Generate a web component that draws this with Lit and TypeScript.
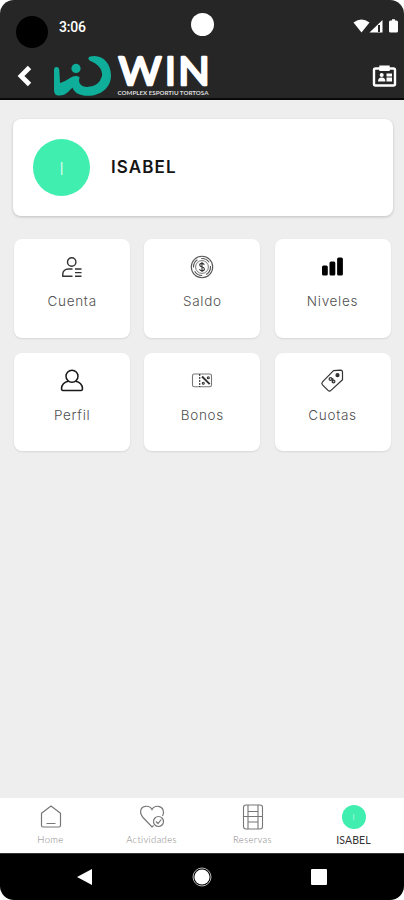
import { LitElement, html, css, TemplateResult } from "lit";
import { customElement, property } from "lit/decorators.js";
import { classMap } from "lit/directives/class-map.js";

const icons: Record<string, TemplateResult> = {
  cuenta: html`<svg width="24" height="24" viewBox="0 0 24 24" fill="none" stroke="#333" stroke-width="1.4">
    <circle cx="11.7" cy="7" r="4.2" /><path d="M12.5 14H8.2C5 14 2.8 16.4 2.8 19v2.2h9.7" />
    <path d="M15 14h6.5M15 17.6h6.5M15 21.2h6.5" /></svg>`,
  saldo: html`<svg width="24" height="24" viewBox="0 0 24 24" fill="none" stroke="#555" stroke-width="1.1">
    <circle cx="12" cy="12" r="10.7" /><circle cx="12" cy="12" r="8.5" stroke-dasharray="9 4" />
    <circle cx="12" cy="12" r="6.4" stroke-width=".8" />
    <path stroke="#333" d="M14.3 9.7c-.4-1-1.2-1.3-2.3-1.3-1.4 0-2.3.6-2.3 1.7 0 2.5 4.7 1.2 4.7 3.8 0 1.100-1 1.800-2.400 1.800-1.300 0-2.200-.6-2.500-1.600M12 7v10" /></svg>`,
  niveles: html`<svg width="24" height="24" viewBox="0 0 24 24" fill="#000">
    <rect x="2" y="10.500" width="5.800" height="10" rx="1.500" /><rect x="9.500" y="6.500" width="5.800" height="14" rx="1.500" />
    <rect x="17.100" y="2.500" width="5.800" height="18" rx="1.500" /></svg>`,
  perfil: html`<svg width="24" height="24" viewBox="0 0 24 24" fill="none" stroke="#181818" stroke-width="1.5" stroke-linejoin="round">
    <circle cx="12" cy="7.2" r="6" /><path d="M8.5 12.2C4.500 13 1.700 16 1.500 19.500c0 1.500.5 2 1.500 2h18c1 0 1.500-.5 1.500-2-.2-3.500-3-6.500-7-7.300" /></svg>`,
  bonos: html`<svg width="24" height="24" viewBox="0 0 24 24" fill="none" stroke="#333" stroke-width="1.1">
    <rect x="2.500" y="5" width="19" height="12.800" rx="1.800" stroke="#777" />
    <path d="M9.700 5v13" stroke-dasharray="2 1" /><path d="m12 7.500 7.700 7.700" stroke-width="1.900" />
    <circle cx="13.300" cy="14.300" r="1" /><circle cx="18.300" cy="8.700" r="1" /></svg>`,
  cuotas: html`<svg width="24" height="24" viewBox="0 0 24 24" fill="none" stroke="#333" stroke-width="1.2" stroke-linejoin="round">
    <path d="M13.5 1.700 20.500 1.200c1.300 0 2 .7 2 2v7.500L11 21.400c-1 .9-2 .9-3 0l-5.500-5.500c-.9-1-.9-2 0-3z" />
    <circle cx="17.500" cy="6.200" r="1.500" fill="#333" /><circle cx="10.500" cy="10" r="1.400" /><circle cx="13.500" cy="12.500" r="1.400" /><path d="M12.700 9v4.500" /></svg>`,
  home: html`<svg width="24" height="26" viewBox="0 0 24 26" fill="none" stroke="#777" stroke-width="1.2">
    <path d="M2.500 9.200 12 2l9.500 7.200v12.300a1.500 1.500 0 0 1-1.500 1.500H4a1.500 1.500 0 0 1-1.500-1.500z" stroke-linejoin="round" /><path d="M7.500 19.500h9" stroke-width="1" /></svg>`,
  actividades: html`<svg width="26" height="26" viewBox="0 0 26 26" fill="none" stroke="#777" stroke-width="1.2">
    <path d="M14.500 21.500 13 23 4 13.500C-.2 8.500 1.500 2.800 6.500 2.300 9.500 2 12 3.300 13 5.500c1-2.200 3.500-3.500 6.500-3.200 4.500.5 6.300 5.500 4 9.700" />
    <circle cx="19.500" cy="17.500" r="5" /><path d="m17 17.500 2 2 3.200-4" /></svg>`,
  reservas: html`<svg width="24" height="26" viewBox="0 0 24 26" fill="none" stroke="#777" stroke-width="1.1">
    <rect x="2.500" y="1" width="19" height="24" rx="2.500" /><path d="M7 1v24M17 1v24M2.500 12.500h19M7 7.500h10M7 18h10" /></svg>`,
};

@customElement("app-header")
export class AppHeader extends LitElement {
  static styles = css`
    :host { display: block; background: #262626; border-bottom: 2px solid #090909; border-radius: 14px 14px 0 0; height: 98px; color: #fff; }
    .status { display: grid; grid-template-columns: 1fr 23px 1fr; height: 52px; align-items: center; }
    .left { display: flex; align-items: center; gap: 11px; padding-left: 16px; }
    .lens { width: 32px; height: 32px; background: #000; border-radius: 50%; margin-top: 11px; }
    .time { font: 500 14px Roboto, sans-serif; letter-spacing: -.2px; margin-top: 2px; }
    .camera { width: 23px; height: 23px; background: #fff; border-radius: 50%; margin-top: -3px; }
    .signals { justify-self: end; width: 50px; height: 18px; margin-right: 3px; }
    .bar { display: flex; height: 46px; padding: 0 7px 0 16px; }
    .back { width: 17px; height: 24px; margin-top: 12px; }
    .logo { width: 160px; height: 53px; margin: -6px 0 0 19px; }
    .badge { width: 26px; height: 24px; margin: 12px 0 0 auto; }
    svg { display: block; }
  `;
  render() {
    return html`
      <div class="status">
        <div class="left"><span class="lens"></span><span class="time">3:06</span></div>
        <span class="camera"></span>
        <svg class="signals" viewBox="0 0 50 18" fill="#fff">
          <path d="M2.500 5.500Q10.500-.5 18.500 5.500L10.500 15.500z" />
          <path d="M31.500 3v12.500h-13z" /><path d="M27 8h2v7h-2z" fill="#262626" />
          <path d="M39.500 3.500h1.500V2.200h3v1.300h1.500q1.500 0 1.500 1.500v9q0 1.500-1.500 1.500h-6q-1.500 0-1.500-1.500V5q0-1.500 1.500-1.500z" />
        </svg>
      </div>
      <div class="bar">
        <svg class="back" viewBox="0 0 17 24" fill="none" stroke="#fff" stroke-width="4.800"><path d="m13.500 3.500-8.500 8.500 8.500 8.500" /></svg>
        <svg class="logo" viewBox="52 46 160 53">
          <path fill="#0fae9a" d="M90 56.500C102 53.500 111 63 111 75.500C111 88 100 96 88 95.800C80 95.700 74 93 72.500 87.500L68 92Q64 96 58 95.500Q54 95 54 90V70Q54 67 56.500 67Q59 67 59.300 70L60 83Q66 81 70 78Q75 74.500 79.500 77L79 81Q79.500 86.500 87 87Q99 87 102 76Q103 66 89.500 60.500Q87 58 90 56.500z" />
          <circle cx="76" cy="68.400" r="4.600" fill="#0fae9a" />
          <text y="85.300" font-family="Lato, sans-serif" font-weight="400" font-size="38.500" fill="#fff" stroke="#fff" stroke-width="2.500" stroke-linejoin="round"><tspan x="118.500" textLength="43" lengthAdjust="spacingAndGlyphs">W</tspan><tspan x="165">I</tspan><tspan x="178.300" textLength="31.500" lengthAdjust="spacingAndGlyphs">N</tspan></text>
          <text x="117.500" y="95.200" textLength="91" lengthAdjust="spacingAndGlyphs" font-family="Lato, sans-serif" font-weight="700" font-size="5" fill="#ddd">COMPLEX ESPORTIU TORTOSA</text>
        </svg>
        <svg class="badge" viewBox="0 0 26 24" fill="none" stroke="#fff" stroke-width="2.400">
          <rect x="3" y="4.500" width="21" height="17" rx="1.500" /><path d="M9.500 2.800h8v3h-8z" fill="#fff" />
          <g fill="#fff" stroke="none"><circle cx="10.700" cy="11" r="2" /><path d="M7 17.500q0-4 3.700-4t3.700 4zM15.500 9.500h5.500v3h-5.500zm0 4h5.500v4h-5.500z" /></g>
        </svg>
      </div>`;
  }
}

@customElement("menu-tile")
export class MenuTile extends LitElement {
  @property() icon = "";
  @property() label = "";
  static styles = css`
    :host { display: flex; flex-direction: column; align-items: center; box-sizing: border-box; padding-top: 16px; background: #fff; border-radius: 8px; box-shadow: 0 1px 2px #0000001a; }
    .label { margin-top: 13px; font: 300 13.5px/18px Inter, sans-serif; letter-spacing: .7px; margin-right: -.7px; color: #505050; }
    svg { display: block; }
  `;
  render() {
    return html`${icons[this.icon]}<span class="label">${this.label}</span>`;
  }
}

@customElement("app-root")
export class AppRoot extends LitElement {
  private tiles = ["Cuenta", "Saldo", "Niveles", "Perfil", "Bonos", "Cuotas"];
  private tabs = ["Home", "Actividades", "Reservas", "ISABEL"];

  static styles = css`
    :host { display: block; background: #fff; }
    .screen { display: flex; flex-direction: column; height: 900px; overflow: hidden; }
    main { flex: 1; background: #eee; padding: 19px 11px 0 13px; }
    .profile { display: flex; align-items: center; height: 97px; background: #fff; border-radius: 8px; box-shadow: 0 1px 3px #0003; padding-left: 20px; box-sizing: border-box; }
    .avatar { display: grid; place-items: center; width: 57px; height: 57px; border-radius: 50%; background: #40eeb0; color: #fff; font: 300 18px Lato, sans-serif; }
    .name { margin-left: 21px; font: 600 17px Inter, sans-serif; letter-spacing: 1.1px; color: #151515; margin-top: -1px; }
    .grid { display: grid; grid-template-columns: repeat(3, 116px); grid-auto-rows: 98.5px; gap: 15px 14.2px; margin: 23px 0 0 1.2px; }
    .grid menu-tile { padding-right: .8px; }
    .tabs { display: grid; grid-template-columns: repeat(4, 1fr); height: 55px; background: #fff; }
    .tab { display: flex; flex-direction: column; align-items: center; padding-top: 6px; font: 300 9.5px/12px Lato, sans-serif; letter-spacing: .35px; color: #858585; }
    .tab span { margin-top: 4px; }
    .tab.active { color: #333; font-size: 10.5px; font-weight: 400; letter-spacing: .1px; }
    .tab .mini { width: 24px; height: 24px; margin: 1px 0; font-size: 8px; }
    .system { display: grid; grid-template-columns: repeat(3, 117px); justify-content: center; align-items: center; justify-items: center; height: 47px; box-sizing: border-box; border-top: 1px solid #333; background: #000; border-radius: 0 0 14px 14px; }
    svg { display: block; }
  `;

  render() {
    return html`<div class="screen">
      <app-header></app-header>
      <main>
        <section class="profile"><div class="avatar">I</div><div class="name">ISABEL</div></section>
        <section class="grid">
          ${this.tiles.map((t) => html`<menu-tile icon=${t.toLowerCase()} label=${t}></menu-tile>`)}
        </section>
      </main>
      <nav class="tabs">
        ${this.tabs.map((t, i) => html`<div class=${classMap({ tab: true, active: i === 3 })}>
          ${i === 3 ? html`<div class="avatar mini">I</div>` : icons[t.toLowerCase()]}<span>${t}</span></div>`)}
      </nav>
      <div class="system">
        <svg width="18" height="18" viewBox="0 0 18 18" fill="#fff"><path d="M1 9 16 1v16z" /></svg>
        <svg width="20" height="20" viewBox="0 0 20 20" fill="#fff"><circle cx="10" cy="10" r="7.6" /><circle cx="10" cy="10" r="9" fill="none" stroke="#bbb" /></svg>
        <svg width="16" height="16" viewBox="0 0 16 16" fill="#fff"><rect width="16" height="16" rx="1" /></svg>
      </div>
    </div>`;
  }
}
